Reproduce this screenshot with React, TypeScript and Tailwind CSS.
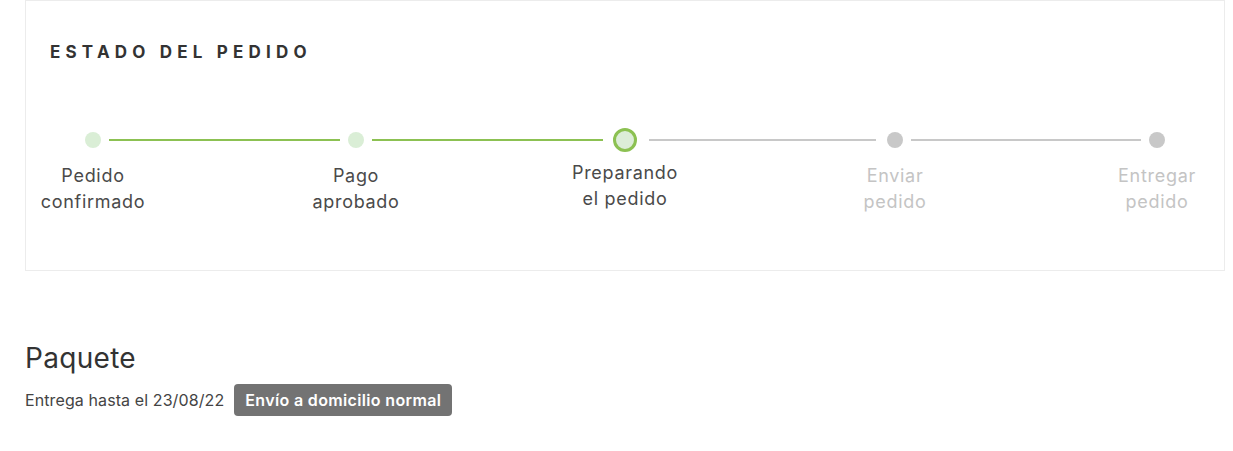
import React from 'react';

type StepState = 'done' | 'current' | 'todo';

interface Step {
  top: string;
  bottom: string;
  state: StepState;
}

const steps: Step[] = [
  { top: 'Pedido', bottom: 'confirmado', state: 'done' },
  { top: 'Pago', bottom: 'aprobado', state: 'done' },
  { top: 'Preparando', bottom: 'el pedido', state: 'current' },
  { top: 'Enviar', bottom: 'pedido', state: 'todo' },
  { top: 'Entregar', bottom: 'pedido', state: 'todo' },
];

const StepDot: React.FC<{ step: Step }> = ({ step }) => {
  if (step.state === 'current') {
    return (
      <div className="flex flex-col items-center w-6">
        <div className="w-6 h-6 rounded-full border-[3px] border-[#8cc152] bg-[#dcedd8]" />
        <div className="mt-[8px] w-[160px] text-center text-[18px] leading-[26px] tracking-[0.7px] text-[#4a4a4a]">
          {step.top}
          <br />
          {step.bottom}
        </div>
      </div>
    );
  }
  const done = step.state === 'done';
  return (
    <div className="flex flex-col items-center w-4 pt-1">
      <div className={`w-4 h-4 rounded-full ${done ? 'bg-[#daeed6]' : 'bg-[#c8c8c8]'}`} />
      <div
        className={`mt-[15px] w-[160px] text-center text-[18px] leading-[26px] tracking-[0.7px] ${
          done ? 'text-[#4a4a4a]' : 'text-[#c4c4c4]'
        }`}
      >
        {step.top}
        <br />
        {step.bottom}
      </div>
    </div>
  );
};

const Line: React.FC<{ green: boolean; width: string; margin: string }> = ({ green, width, margin }) => (
  <div className={`h-[2px] mt-[11px] ${width} ${margin} ${green ? 'bg-[#8cc152]' : 'bg-[#c8c8c8]'}`} />
);

export default function App() {
  return (
    <div className="w-[1233px] h-[451px] bg-white font-['Inter',sans-serif]">
      <div className="ml-[25px] w-[1200px] h-[271px] border border-[#ececec] px-6 pt-[41px]">
        <h2 className="text-[17px] leading-5 font-bold tracking-[5.2px] text-[#333333]">ESTADO DEL PEDIDO</h2>
        <div className="flex items-start mt-[66px] ml-[35px]">
          <StepDot step={steps[0]} />
          <Line green width="w-[231px]" margin="mx-2" />
          <StepDot step={steps[1]} />
          <Line green width="w-[231px]" margin="ml-2 mr-[10px]" />
          <StepDot step={steps[2]} />
          <Line green={false} width="w-[227px]" margin="ml-3 mr-[11px]" />
          <StepDot step={steps[3]} />
          <Line green={false} width="w-[230px]" margin="mx-2" />
          <StepDot step={steps[4]} />
        </div>
      </div>

      <div className="ml-[25px] mt-[71px]">
        <h3 className="text-[28px] leading-8 tracking-[0.3px] text-[#333333]">Paquete</h3>
        <div className="flex items-center mt-[10px]">
          <span className="text-[16px] tracking-[0.1px] text-[#444444]">Entrega hasta el 23/08/22</span>
          <span className="ml-[10px] h-8 px-[11px] flex items-center rounded-[4px] bg-[#737373] text-white text-[16px] tracking-[0.35px] font-semibold">
            Envío a domicilio normal
          </span>
        </div>
      </div>
    </div>
  );
}
